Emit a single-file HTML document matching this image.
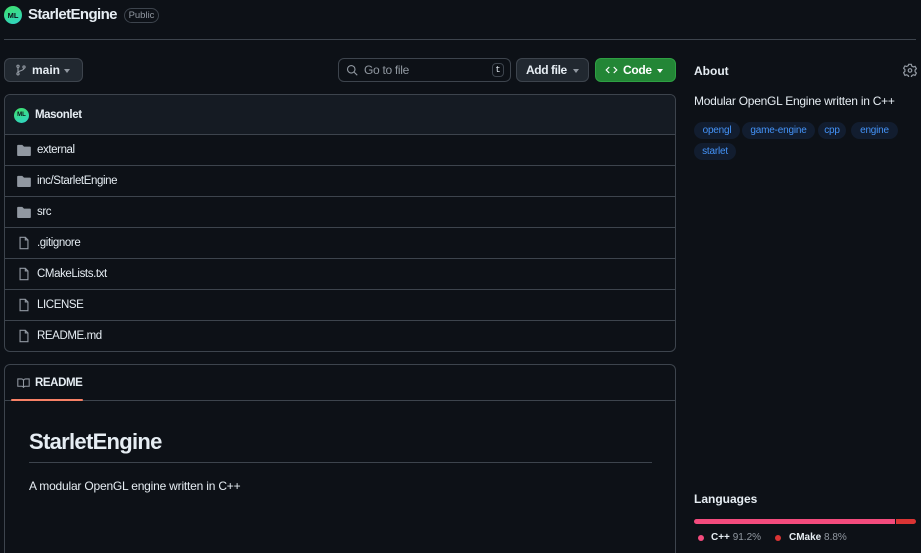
<!DOCTYPE html>
<html><head><meta charset="utf-8"><style>
*{box-sizing:border-box;margin:0;padding:0}
html,body{width:921px;height:553px;overflow:hidden}
body{background:#0d1117;color:#e6edf3;font-family:"Liberation Sans",sans-serif;position:relative}
.a{position:absolute}
.av{border-radius:50%;background:linear-gradient(160deg,#3fe06a,#2fd3c8);color:#0d1117;font-weight:bold;display:flex;align-items:center;justify-content:center}
.btn{position:absolute;border:1px solid #3d444d;border-radius:6px;background:#212830;font-size:12px;font-weight:bold}
.btn>*{position:absolute}
.row{position:absolute;left:0;right:0;height:31px;border-top:1px solid #3d444d;display:flex;align-items:center;font-size:11.5px;padding-left:12px;letter-spacing:-0.4px}
.row svg{margin-right:6px}
.pill{position:absolute;height:17px;border-radius:9px;background:#121d2f;color:#4493f8;font-size:10px;display:flex;align-items:center;justify-content:center;letter-spacing:-0.2px}
.caret{width:0;height:0;border-left:3.5px solid transparent;border-right:3.5px solid transparent;border-top:4px solid #9198a1;top:10px}
</style></head><body>
<div class="a av" style="left:4px;top:6px;width:18px;height:18px;font-size:7.5px">ML</div>
<div class="a" style="left:28px;top:6px;font-size:15px;font-weight:bold;letter-spacing:-0.6px">StarletEngine</div>
<div class="a" style="left:124px;top:8px;width:35px;height:15px;border:1px solid #3d444d;border-radius:8px;font-size:9.5px;color:#9198a1;text-align:center;line-height:13px">Public</div>
<div class="a" style="left:4px;top:39px;width:912px;height:1px;background:#3d444d"></div>

<div class="btn" style="left:4px;top:58px;width:79px;height:24px">
<svg style="left:10px;top:5px" width="12" height="12" viewBox="0 0 16 16" fill="none" stroke="#9198a1" stroke-width="1.5"><circle cx="4" cy="3" r="1.5"/><circle cx="12" cy="4" r="1.5"/><circle cx="4" cy="13" r="1.5"/><path d="M4 4.5v7M12 5.5c0 4-8 3-8 6"/></svg>
<span style="left:27px;top:4px">main</span><span class="caret" style="left:59px"></span></div>

<div class="a" style="left:338px;top:58px;width:173px;height:24px;border:1px solid #3d444d;border-radius:6px;font-size:12px;color:#9198a1;display:flex;align-items:center;padding-left:7px">
<svg width="12" height="12" viewBox="0 0 16 16" fill="none" stroke="#9198a1" stroke-width="1.5"><circle cx="7" cy="7" r="5"/><path d="M11 11l4 4"/></svg>
<span style="margin-left:6px;letter-spacing:-0.3px">Go to file</span>
<span style="position:absolute;right:6px;top:4px;width:12px;height:14px;border:1px solid #3d444d;border-radius:4px;font-size:9px;color:#e6edf3;text-align:center;line-height:12px;font-family:'Liberation Mono',monospace">t</span></div>

<div class="btn" style="left:516px;top:58px;width:73px;height:24px;letter-spacing:-0.4px"><span style="left:9px;top:4px">Add file</span><span class="caret" style="left:56px"></span></div>
<div class="btn" style="left:595px;top:58px;width:81px;height:24px;background:#238636;border-color:#2ea043;color:#fff;letter-spacing:-0.3px">
<svg style="left:9px;top:5px" width="13" height="12" viewBox="0 0 16 16" fill="none" stroke="#fff" stroke-width="1.6"><path d="M5 4L1 8l4 4M11 4l4 4-4 4"/></svg>
<span style="left:27px;top:4px">Code</span><span class="caret" style="left:61px;border-top-color:#fff"></span></div>

<div class="a" style="left:4px;top:94px;width:672px;height:258px;border:1px solid #3d444d;border-radius:6px;overflow:hidden">
<div style="height:40px;background:#151b23;display:flex;align-items:center;padding-left:9px;font-size:11.5px;font-weight:bold;letter-spacing:-0.4px">
<div class="av" style="width:15px;height:15px;font-size:6px;margin-right:6px;letter-spacing:0">ML</div>Masonlet</div>
<div class="row" style="top:39px"><svg width="14" height="12" viewBox="0 0 16 14"><path d="M0 2a1 1 0 011-1h5l2 2h7a1 1 0 011 1v9a1 1 0 01-1 1H1a1 1 0 01-1-1z" fill="#9198a1"/></svg>external</div>
<div class="row" style="top:70px"><svg width="14" height="12" viewBox="0 0 16 14"><path d="M0 2a1 1 0 011-1h5l2 2h7a1 1 0 011 1v9a1 1 0 01-1 1H1a1 1 0 01-1-1z" fill="#9198a1"/></svg>inc/StarletEngine</div>
<div class="row" style="top:101px"><svg width="14" height="12" viewBox="0 0 16 14"><path d="M0 2a1 1 0 011-1h5l2 2h7a1 1 0 011 1v9a1 1 0 01-1 1H1a1 1 0 01-1-1z" fill="#9198a1"/></svg>src</div>
<div class="row" style="top:132px"><svg width="14" height="14" viewBox="0 0 16 16" fill="none" stroke="#9198a1" stroke-width="1.3"><path d="M3.5 1.5h6l3 3v10h-9z M9.5 1.5v3h3"/></svg>.gitignore</div>
<div class="row" style="top:163px"><svg width="14" height="14" viewBox="0 0 16 16" fill="none" stroke="#9198a1" stroke-width="1.3"><path d="M3.5 1.5h6l3 3v10h-9z M9.5 1.5v3h3"/></svg>CMakeLists.txt</div>
<div class="row" style="top:194px"><svg width="14" height="14" viewBox="0 0 16 16" fill="none" stroke="#9198a1" stroke-width="1.3"><path d="M3.5 1.5h6l3 3v10h-9z M9.5 1.5v3h3"/></svg>LICENSE</div>
<div class="row" style="top:225px"><svg width="14" height="14" viewBox="0 0 16 16" fill="none" stroke="#9198a1" stroke-width="1.3"><path d="M3.5 1.5h6l3 3v10h-9z M9.5 1.5v3h3"/></svg>README.md</div>
</div>

<div class="a" style="left:4px;top:364px;width:672px;height:200px;border:1px solid #3d444d;border-radius:6px">
<div style="height:36px;border-bottom:1px solid #3d444d;display:flex;align-items:center;padding-left:12px;font-size:11.5px;font-weight:bold;letter-spacing:-0.4px">
<svg width="13" height="12" viewBox="0 0 16 14" fill="none" stroke="#9198a1" stroke-width="1.3"><path d="M1 2h4.5a2.5 2.5 0 012.5 2.5V13a2 2 0 00-2-2H1zM15 2h-4.5A2.5 2.5 0 008 4.5V13a2 2 0 012-2h5z"/></svg>
<span style="margin-left:5px">README</span></div>
<div class="a" style="left:6px;top:34px;width:72px;height:2px;background:#f78166;border-radius:1px"></div>
<div class="a" style="left:24px;top:64px;font-size:22px;font-weight:bold;letter-spacing:-0.7px">StarletEngine</div>
<div class="a" style="left:24px;top:97px;width:623px;height:1px;background:#3d444d"></div>
<div class="a" style="left:24px;top:114px;font-size:12px;letter-spacing:-0.2px">A modular OpenGL engine written in C++</div>
</div>

<div class="a" style="left:694px;top:64px;font-size:12px;font-weight:bold">About</div>
<svg class="a" style="left:903px;top:63px" width="14" height="14" viewBox="0 0 16 16" fill="none" stroke="#9198a1" stroke-width="1.4"><path d="M6.5 1.5h3l.5 2 1.8 1 2-.6 1.5 2.6-1.5 1.5v2l1.5 1.5-1.5 2.6-2-.6-1.8 1-.5 2h-3l-.5-2-1.8-1-2 .6L.7 11l1.5-1.5v-2L.7 6l1.5-2.6 2 .6 1.8-1z"/><circle cx="8" cy="8.5" r="2"/></svg>
<div class="a" style="left:694px;top:94px;font-size:12px;letter-spacing:-0.25px">Modular OpenGL Engine written in C++</div>
<div class="pill" style="left:694px;top:122px;width:46px">opengl</div>
<div class="pill" style="left:742px;top:122px;width:73px">game-engine</div>
<div class="pill" style="left:818px;top:122px;width:28px">cpp</div>
<div class="pill" style="left:851px;top:122px;width:47px">engine</div>
<div class="pill" style="left:694px;top:143px;width:42px">starlet</div>

<div class="a" style="left:694px;top:492px;font-size:12px;font-weight:bold">Languages</div>
<div class="a" style="left:694px;top:519px;width:222px;height:5px;border-radius:3px;overflow:hidden;display:flex"><div style="width:201px;background:#f34b7d"></div><div style="width:1px;background:#0d1117"></div><div style="flex:1;background:#da3434"></div></div>
<div class="a" style="left:698px;top:535px;width:6px;height:6px;border-radius:50%;background:#f34b7d"></div>
<div class="a" style="left:711px;top:532px;font-size:10px"><b>C++</b> <span style="color:#9198a1">91.2%</span></div>
<div class="a" style="left:775px;top:535px;width:6px;height:6px;border-radius:50%;background:#da3434"></div>
<div class="a" style="left:789px;top:532px;font-size:10px"><b>CMake</b> <span style="color:#9198a1">8.8%</span></div>
</body></html>
